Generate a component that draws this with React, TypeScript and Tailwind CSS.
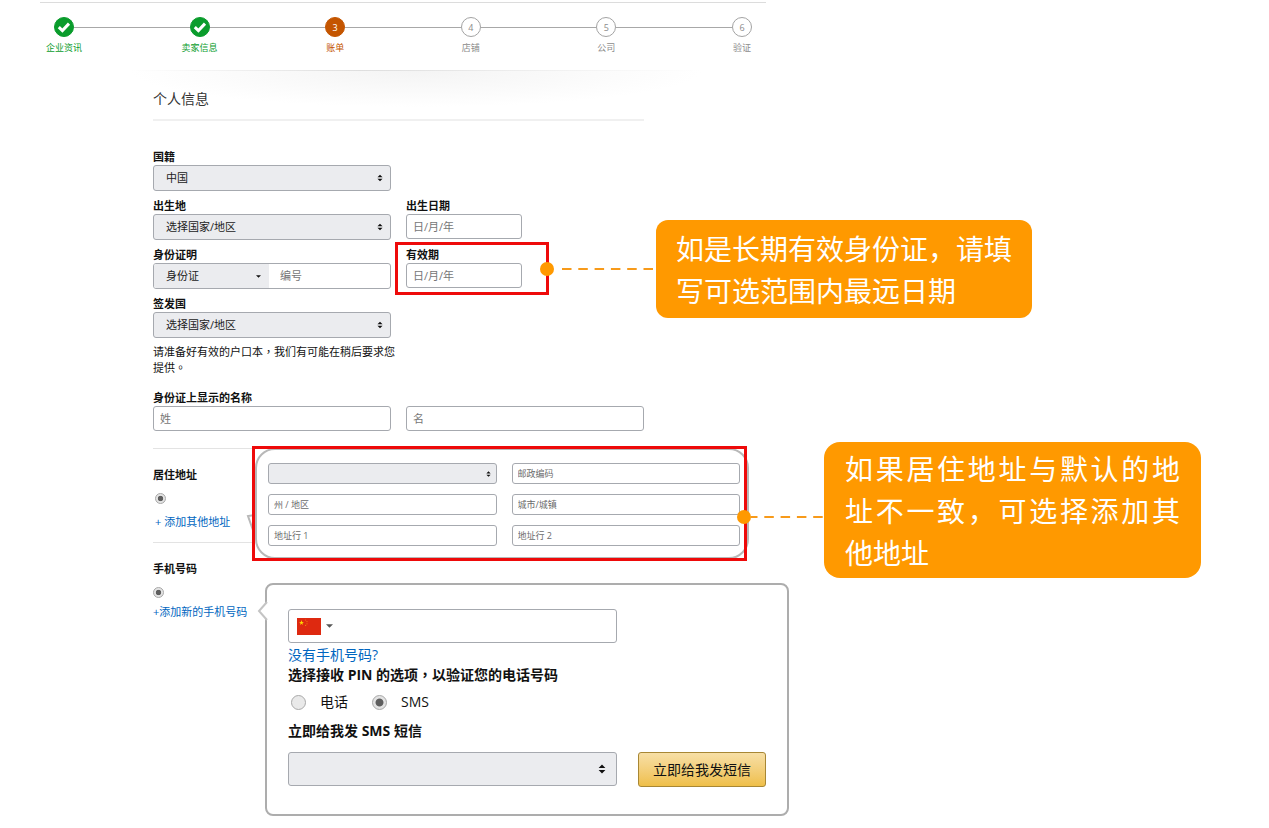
import React, { useState } from 'react';

type StepStatus = 'done' | 'current' | 'pending';

interface Step {
    label: string;
    status: StepStatus;
}

const STEPS: Step[] = [
    { label: '企业资讯', status: 'done' },
    { label: '卖家信息', status: 'done' },
    { label: '账单', status: 'current' },
    { label: '店铺', status: 'pending' },
    { label: '公司', status: 'pending' },
    { label: '验证', status: 'pending' },
];

const circleStyles: Record<StepStatus, string> = {
    done: 'bg-[#0a9c2c] border-[#0a9c2c] text-white',
    current: 'bg-[#c45500] border-[#c45500] text-white',
    pending: 'bg-white border-[#a3a3a3] text-[#8c8c8c]',
};

const labelStyles: Record<StepStatus, string> = {
    done: 'text-[#0a9c2c]',
    current: 'text-[#c45500]',
    pending: 'text-[#8c8c8c]',
};

const CheckIcon = () => (
    <svg viewBox="0 0 20 20" className="w-5 h-5 shrink-0" fill="none" stroke="currentColor" strokeWidth="3">
        <path d="M4.8 10.2 L8.4 13.6 L15 6.6" />
    </svg>
);

const Stepper: React.FC = () => (
    <ol className="flex items-start pt-3 pb-[15px]">
        {STEPS.map((step, index) => (
            <React.Fragment key={step.label}>
                {index > 0 && <li aria-hidden="true" className="flex-1 -mx-3.5 mt-3 h-px bg-[#a8a8a8]" />}
                <li className="w-12 flex flex-col items-center">
                    <span
                        className={`w-5 h-5 mt-0.5 mb-1 rounded-full border flex items-center justify-center text-[9px] leading-none ${circleStyles[step.status]}`}
                    >
                        {step.status === 'done' ? <CheckIcon /> : index + 1}
                    </span>
                    <span className={`text-[9px] leading-[14px] whitespace-nowrap ${labelStyles[step.status]}`}>{step.label}</span>
                </li>
            </React.Fragment>
        ))}
    </ol>
);

const SortArrows = ({ className }: { className: string }) => (
    <svg viewBox="0 0 8 10" className={`absolute top-1/2 -translate-y-1/2 pointer-events-none ${className}`} fill="#111">
        <path d="M4 0.6 L7.4 4 H0.6 Z M4 9.4 L7.4 6 H0.6 Z" />
    </svg>
);

const Caret = ({ className }: { className: string }) => (
    <svg viewBox="0 0 8 4" className={className} fill="currentColor">
        <path d="M0 0 H8 L4 4 Z" />
    </svg>
);

const boxStyle = 'w-full border border-[#a6a9af] rounded-[3px] outline-none';
const inputStyle = `${boxStyle} h-[25px] bg-white pl-1.5 text-[11px] placeholder-[#767676]`;
const smallInputStyle = `${boxStyle} h-[21px] bg-white pl-[5px] text-[9px] placeholder-[#6b6b6b]`;
const radioStyle =
    'appearance-none block rounded-full border border-[#a9a9a9] bg-[#e9e9e9] checked:bg-[radial-gradient(circle,#5e5e5e_38%,#e3e3e3_48%)]';

interface FieldProps {
    id: string;
    label: string;
    children: React.ReactNode;
}

const Field: React.FC<FieldProps> = ({ id, label, children }) => (
    <div>
        <label htmlFor={id} className="block text-[11px] leading-4 font-bold">{label}</label>
        {children}
    </div>
);

const CountrySelect = ({ id, text }: { id: string; text: string }) => (
    <div className="relative">
        <select id={id} className={`${boxStyle} block appearance-none h-[26px] bg-[#ebecef] pl-3 text-[11px] text-[#222]`}>
            <option>{text}</option>
        </select>
        <SortArrows className="right-2 w-[6px] h-2" />
    </div>
);

interface CalloutProps {
    className: string;
    pointerClass: string;
    lineStart: number;
    children: React.ReactNode;
}

// Orange note, tied to the highlighted area by a dot and a dashed line
const Callout: React.FC<CalloutProps> = ({ className, pointerClass, lineStart, children }) => (
    <div className={`absolute z-10 flex items-start ${className}`}>
        <span className={`flex flex-1 min-w-0 items-center ${pointerClass}`}>
            <span className="w-3.5 h-3.5 shrink-0 rounded-full bg-[#ff9900]" />
            <svg className="flex-1 min-w-0 h-0.5">
                <line x1={lineStart} y1="1" x2="200" y2="1" stroke="#f79a1a" strokeWidth="2" strokeDasharray="9.5 6.8" />
            </svg>
        </span>
        {children}
    </div>
);

const App: React.FC = () => {
    const [pinMethod, setPinMethod] = useState('sms');

    return (
        <div className="min-h-screen bg-white text-[#111] overflow-x-hidden font-['Open_Sans','Noto_Sans_CJK_SC',sans-serif]">
            <header className="max-w-[766px] pl-10 pt-0.5">
                <div className="border-t border-[#dcdcdc]">
                    <Stepper />
                </div>
            </header>

            <div className="max-w-[766px] -mb-9 pl-[130px] pr-16">
                <div className="h-px bg-[linear-gradient(90deg,transparent,#dedede_40%,#e6e6e6_55%,transparent)]" />
                <div className="h-9 bg-[radial-gradient(ellipse_50%_100%_at_50%_0%,#f4f4f4,#fff)]" />
            </div>

            <main className="relative pl-[153px] pb-3">
                <form className="max-w-[491px]" onSubmit={(e) => e.preventDefault()}>
                    <h1 className="text-sm leading-5 pt-[18px] pb-[10px] border-b-2 border-[#f0f0f0] text-[#333]">个人信息</h1>

                    <div className="grid grid-cols-2 gap-x-[15px] gap-y-[7px] pt-7">
                        <Field id="nationality" label="国籍">
                            <CountrySelect id="nationality" text="中国" />
                        </Field>
                        <div />
                        <Field id="birthplace" label="出生地">
                            <CountrySelect id="birthplace" text="选择国家/地区" />
                        </Field>
                        <div className="w-[116px]">
                            <Field id="birthdate" label="出生日期">
                                <input id="birthdate" type="text" placeholder="日/月/年" className={`${inputStyle} block`} />
                            </Field>
                        </div>
                        <Field id="id-type" label="身份证明">
                            <div className={`${boxStyle} flex h-[26px] overflow-hidden`}>
                                <div className="relative w-[115px] shrink-0">
                                    <select id="id-type" className="block appearance-none w-full h-full bg-[#ebecef] pl-3 text-[11px] text-[#222] outline-none">
                                        <option>身份证</option>
                                    </select>
                                    <Caret className="absolute right-2 top-[11px] w-[5px] h-[3px] pointer-events-none" />
                                </div>
                                <input aria-label="编号" type="text" placeholder="编号" className="w-full min-w-0 pl-[11px] text-[11px] placeholder-[#767676] outline-none" />
                            </div>
                        </Field>
                        <div className="relative w-[116px]">
                            <Field id="expiry" label="有效期">
                                <input id="expiry" type="text" placeholder="日/月/年" className={`${inputStyle} block`} />
                            </Field>
                            <div className="absolute -top-[5px] -left-[11px] w-[154px] h-[53px] border-[3px] border-[#ee0a0a] pointer-events-none" />
                            <Callout className="-top-[27px] left-[134px] w-[492px]" pointerClass="mt-[42px]" lineStart={8}>
                                <p className="w-[376px] shrink-0 rounded-xl bg-[#ff9900] px-5 py-[7px] text-[28px] leading-[42px] text-white font-['Noto_Sans_CJK_SC',sans-serif]">
                                    如是长期有效身份证，请填写可选范围内最远日期
                                </p>
                            </Callout>
                        </div>
                        <Field id="issuer" label="签发国">
                            <CountrySelect id="issuer" text="选择国家/地区" />
                        </Field>
                    </div>

                    <p className="mt-1.5 w-[242px] text-[11px] leading-4 font-['Open_Sans','Noto_Sans_CJK_TC',sans-serif]">请准备好有效的户口本，我们有可能在稍后要求您提供。</p>

                    <div className="grid grid-cols-2 items-end gap-x-[15px] mt-3.5">
                        <Field id="last-name" label="身份证上显示的名称">
                            <input id="last-name" type="text" placeholder="姓" className={`${inputStyle} block`} />
                        </Field>
                        <input aria-label="名" type="text" placeholder="名" className={inputStyle} />
                    </div>

                    <div className="flex items-start mt-[15px]">
                        <div className="w-[99px] shrink-0 whitespace-nowrap text-[11px] leading-4">
                            <section className="mt-0.5 border-y border-[#e3e3e3] pt-[18px] pb-3">
                                <h2 className="font-bold">居住地址</h2>
                                <input type="radio" name="address" aria-label="居住地址" defaultChecked className={`${radioStyle} w-[11px] h-[11px] mt-[10px] ml-0.5`} />
                                <a href="#address" className="block mt-[10px] ml-0.5 text-[#0066c0]">+ 添加其他地址</a>
                            </section>
                            <section className="pt-[18px]">
                                <h2 className="font-bold">手机号码</h2>
                                <input type="radio" name="phone" aria-label="手机号码" defaultChecked className={`${radioStyle} w-[11px] h-[11px] mt-[10px]`} />
                                <a href="#phone" className="block mt-1.5 text-[#0066c0]">+添加新的手机号码</a>
                            </section>
                        </div>

                        <div className="shrink-0">
                            <section id="address" className="relative w-[495px]">
                                <div className="absolute inset-y-0.5 left-[3px] -right-0.5 rounded-[20px] border-2 border-[#b8b8b8]" />
                                <svg viewBox="0 0 10 22" className="absolute -left-1.5 top-[66px] w-[10px] h-[22px]" fill="#fff" stroke="#b8b8b8" strokeWidth="2">
                                    <path d="M9 3 L2 4 L8 21" />
                                </svg>
                                <div className="relative grid grid-cols-2 gap-x-[15px] gap-y-[10px] border-[3px] border-[#ee0a0a] pt-3.5 pb-3 pl-[13px] pr-1">
                                    <div className="relative">
                                        <select aria-label="国家/地区" className={`${boxStyle} block appearance-none h-[21px] bg-[#ebecef] text-[9px]`} />
                                        <SortArrows className="right-1.5 w-[5px] h-[7px]" />
                                    </div>
                                    <input aria-label="邮政编码" type="text" placeholder="邮政编码" className={smallInputStyle} />
                                    <input aria-label="州 / 地区" type="text" placeholder="州 / 地区" className={smallInputStyle} />
                                    <input aria-label="城市/城镇" type="text" placeholder="城市/城镇" className={smallInputStyle} />
                                    <input aria-label="地址行 1" type="text" placeholder="地址行 1" className={smallInputStyle} />
                                    <input aria-label="地址行 2" type="text" placeholder="地址行 2" className={smallInputStyle} />
                                </div>
                                <Callout className="-top-1 left-[485px] w-[464px]" pointerClass="mt-[68px]" lineStart={-3}>
                                    <p className="w-[377px] shrink-0 rounded-2xl bg-[#ff9900] px-[21px] py-[5px] text-[28px] leading-[42px] text-justify text-white font-['Noto_Sans_CJK_SC',sans-serif]">
                                        如果居住地址与默认的地址不一致，可选择添加其他地址
                                    </p>
                                </Callout>
                            </section>

                            <section id="phone" className="relative w-[524px] ml-[13px] mt-[22px] rounded-lg border-2 border-[#adadad] pt-6 pb-[27px] px-[21px] text-sm leading-5">
                                <svg viewBox="0 0 11 20" className="absolute -left-[10px] top-4 w-[11px] h-5" fill="#fff" stroke="#c4c4c4" strokeWidth="2">
                                    <path d="M10 1 L2 10 L10 19" />
                                </svg>
                                <div className="flex items-center w-[329px] h-[34px] border border-[#a6a9af] rounded-[3px] pl-2">
                                    <button type="button" aria-label="中国" className="flex items-center gap-[5px] text-[#555]">
                                        <svg viewBox="0 0 24 17" className="w-6 h-[17px]">
                                            <rect width="24" height="17" fill="#de2910" />
                                            <path d="M4.5 2 L5.1 3.9 H7 L5.4 5 L6 6.9 L4.5 5.7 L3 6.9 L3.6 5 L2 3.9 H3.9 Z" fill="#ffde00" />
                                            <g fill="#f08010">
                                                <circle cx="8.6" cy="2" r="0.6" />
                                                <circle cx="10" cy="3.6" r="0.6" />
                                                <circle cx="10" cy="5.8" r="0.6" />
                                                <circle cx="8.6" cy="7.4" r="0.6" />
                                            </g>
                                        </svg>
                                        <Caret className="w-[7px] h-1" />
                                    </button>
                                    <input aria-label="手机号码" type="tel" className="flex-1 min-w-0 h-full px-2 outline-none" />
                                </div>
                                <a href="#phone" className="block mt-0.5 text-[#0066c0]">没有手机号码?</a>
                                <h3 className="font-bold font-['Open_Sans','Noto_Sans_CJK_TC',sans-serif]">选择接收 PIN 的选项，以验证您的电话号码</h3>
                                <div className="flex items-center mt-[7px] pl-[3px]">
                                    <input
                                        id="pin-call"
                                        type="radio"
                                        name="pin"
                                        checked={pinMethod === 'call'}
                                        onChange={() => setPinMethod('call')}
                                        className={`${radioStyle} w-[15px] h-[15px]`}
                                    />
                                    <label htmlFor="pin-call" className="ml-3.5 mr-6">电话</label>
                                    <input
                                        id="pin-sms"
                                        type="radio"
                                        name="pin"
                                        checked={pinMethod === 'sms'}
                                        onChange={() => setPinMethod('sms')}
                                        className={`${radioStyle} w-[15px] h-[15px]`}
                                    />
                                    <label htmlFor="pin-sms" className="ml-3.5">SMS</label>
                                </div>
                                <label htmlFor="sms-language" className="block mt-[9px] font-bold">立即给我发 SMS 短信</label>
                                <div className="flex items-start justify-between mt-[11px]">
                                    <div className="relative w-[329px]">
                                        <select id="sms-language" className={`${boxStyle} block appearance-none h-[34px] bg-[#ebecef]`} />
                                        <SortArrows className="right-[11px] w-2 h-[10px]" />
                                    </div>
                                    <button type="submit" className="w-32 h-[35px] rounded-[3px] border border-[#a88734] bg-linear-to-b from-[#f7dfa5] to-[#efbf48]">
                                        立即给我发短信
                                    </button>
                                </div>
                            </section>
                        </div>
                    </div>
                </form>
            </main>
        </div>
    );
};

export default App;
